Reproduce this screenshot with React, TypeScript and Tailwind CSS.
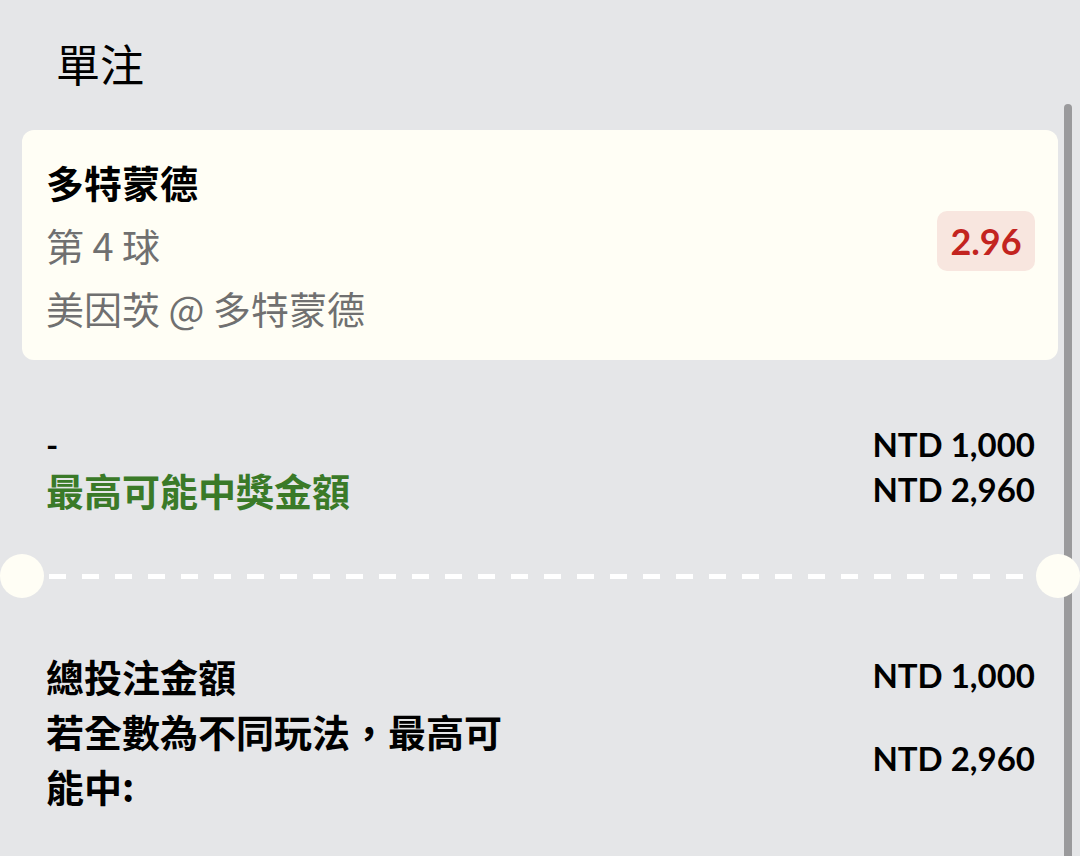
import React from "react";

const cjk = "font-['Noto_Sans_CJK_TC','Noto_Sans_CJK_SC',sans-serif]";
const lato = "font-['Lato','Noto_Sans_CJK_TC',sans-serif]";

export default function App() {
  return (
    <div className={`relative w-[1080px] h-[856px] overflow-hidden bg-[#e5e6e8] text-black ${cjk}`}>
      {/* scrollbar */}
      <div className="absolute right-[8px] top-[104px] w-[8px] h-[800px] rounded-full bg-[#9a9a9c]" />

      {/* header */}
      <div className="pt-[41px] pl-[56px]">
        <h1 className="text-[44px] leading-none font-normal">單注</h1>
      </div>

      {/* bet card */}
      <div className="mx-[22px] mt-[45px] rounded-[12px] bg-[#fffef5] pl-[24px] pr-[23px] pt-[33px] pb-[33px] flex items-center justify-between">
        <div className="flex flex-col gap-[25px]">
          <div className="text-[38px] leading-none font-bold">多特蒙德</div>
          <div className="text-[38px] leading-none text-[#707070]">第 4 球</div>
          <div className="text-[38px] leading-none text-[#707070]">美因茨 @ 多特蒙德</div>
        </div>
        <div className={`-mt-[8px] rounded-[10px] bg-[#f8e6df] w-[98px] h-[60px] flex items-center justify-center text-[36px] font-bold text-[#c3241f] ${lato}`}>
          2.96
        </div>
      </div>

      {/* potential payout */}
      <div className="mt-[62px] pl-[46px] pr-[45px] flex flex-col">
        <div className="flex items-center justify-between h-[45px]">
          <span className={`text-[33px] font-bold leading-none ${lato}`}>-</span>
          <span className={`text-[33px] font-bold leading-[45px] ${lato}`}>NTD 1,000</span>
        </div>
        <div className="flex items-center justify-between h-[45px]">
          <span className="text-[38px] font-bold leading-none text-[#3a7a28]">最高可能中獎金額</span>
          <span className={`text-[33px] font-bold leading-[45px] ${lato}`}>NTD 2,960</span>
        </div>
      </div>

      {/* divider */}
      <div className="mt-[42px] flex items-center">
        <div className="w-[44px] h-[44px] rounded-full bg-[#fffef5] shrink-0" />
        <div className="flex-1 mx-[5px] h-[5px] bg-[repeating-linear-gradient(90deg,#ffffff_0px,#ffffff_17px,transparent_17px,transparent_33px)]" />
        <div className="relative z-10 w-[44px] h-[44px] rounded-full bg-[#fffef5] shrink-0" />
      </div>

      {/* totals */}
      <div className="mt-[50px] pl-[46px] pr-[45px] flex flex-col">
        <div className="flex items-center justify-between">
          <span className="text-[38px] font-bold leading-[55px]">總投注金額</span>
          <span className={`text-[33px] font-bold leading-[45px] ${lato}`}>NTD 1,000</span>
        </div>
        <div className="flex items-center justify-between">
          <span className="w-[480px] text-[38px] font-bold leading-[55px]">若全數為不同玩法，最高可能中:</span>
          <span className={`text-[33px] font-bold leading-[45px] ${lato}`}>NTD 2,960</span>
        </div>
      </div>
    </div>
  );
}
